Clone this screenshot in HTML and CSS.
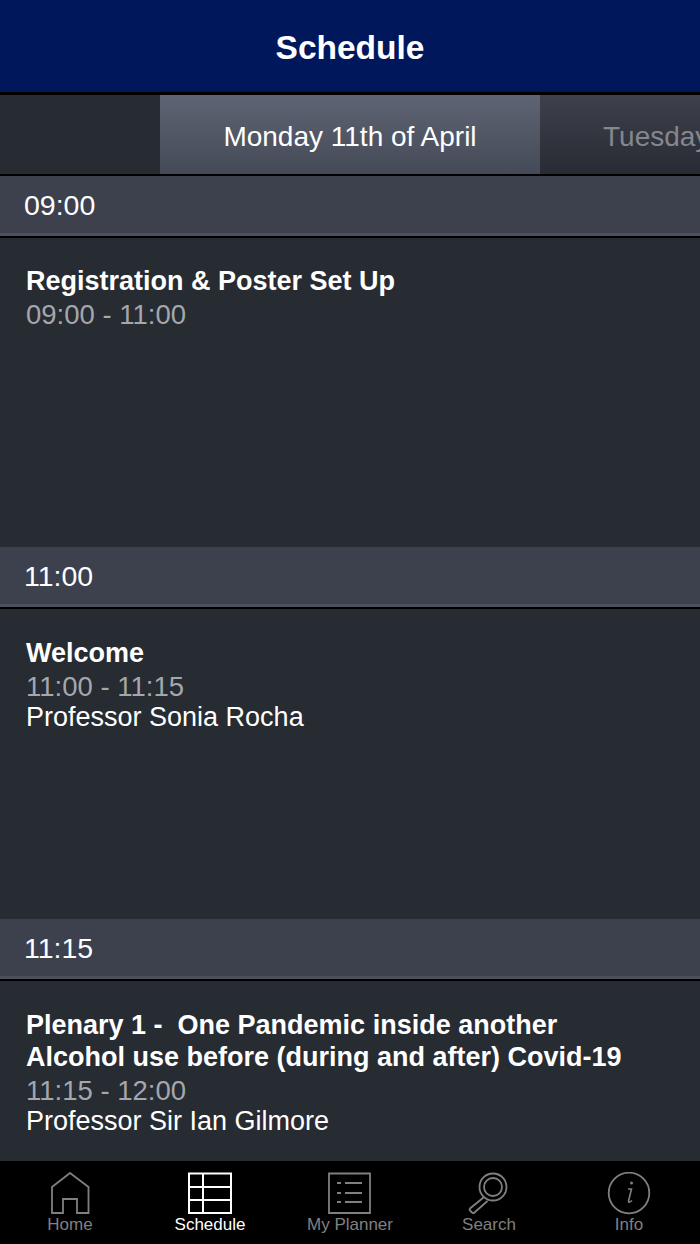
FILE: index.html
```html
<!DOCTYPE html>
<html lang="en">
<head>
    <meta charset="UTF-8">
    <title>Schedule</title>
    <link rel="stylesheet" href="styles.css">
</head>
<body>
<div class="app">
    <header class="navbar">Schedule</header>

    <div class="days">
        <div class="day-blank"></div>
        <div class="day day-active">Monday 11th of April</div>
        <div class="day day-next">Tuesday 12th of April</div>
    </div>

    <main class="list">
        <div class="time-head">09:00</div>
        <div class="session session-first">
            <div class="session-title">Registration &amp; Poster Set Up</div>
            <div class="session-time">09:00 - 11:00</div>
        </div>

        <div class="time-head">11:00</div>
        <div class="session">
            <div class="session-title">Welcome</div>
            <div class="session-time">11:00 - 11:15</div>
            <div class="session-person">Professor Sonia Rocha</div>
        </div>

        <div class="time-head">11:15</div>
        <div class="session session-last">
            <div class="session-title">Plenary 1 -&nbsp; One Pandemic inside another<br>Alcohol use before (during and after) Covid-19</div>
            <div class="session-time">11:15 - 12:00</div>
            <div class="session-person">Professor Sir Ian Gilmore</div>
        </div>
    </main>

    <nav class="tabbar">
        <div class="tab">
            <svg class="tab-icon" viewBox="0 0 44 44" fill="none" stroke="currentColor" stroke-width="1.8">
                <path d="M4 41V15L22 1 40.5 15V41H29V27H15V41Z"/>
            </svg>
            <span>Home</span>
        </div>
        <div class="tab tab-active">
            <svg class="tab-icon" viewBox="0 0 44 44" fill="none" stroke="currentColor" stroke-width="2">
                <path d="M1 1.5H43V41H1ZM1 15H43M1 28H43M15 1.5V41"/>
            </svg>
            <span>Schedule</span>
        </div>
        <div class="tab">
            <svg class="tab-icon" viewBox="0 0 44 44" fill="none" stroke="currentColor" stroke-width="1.8">
                <path d="M1 1.5H42V41H1Z"/>
                <path d="M9 11H13M17 11H34M9 21H13M17 21H34M9 30H13M17 30H34"/>
            </svg>
            <span>My Planner</span>
        </div>
        <div class="tab tab-shift">
            <svg class="tab-icon" viewBox="0 0 44 44" fill="none" stroke="currentColor" stroke-width="1.8">
                <circle cx="26" cy="15" r="13.5"/>
                <circle cx="26" cy="15" r="9"/>
                <path d="M16.5 25.5 3 36.5Q2 37.5 3 38.5L5.5 41Q6.5 41.5 7.5 40.5L20.5 29"/>
            </svg>
            <span>Search</span>
        </div>
        <div class="tab tab-shift">
            <svg class="tab-icon" viewBox="0 0 44 44" fill="none" stroke="currentColor" stroke-width="1.8">
                <circle cx="22" cy="21" r="20.3"/>
                <path d="M21 17H24.5L21.5 29Q21.5 31.5 25 28.5" stroke-width="1.6"/>
                <circle cx="24.5" cy="11" r="1.5" fill="currentColor" stroke="none"/>
            </svg>
            <span>Info</span>
        </div>
    </nav>
</div>
</body>
</html>
```

FILE: styles.css
```css
html, body {
    margin: 0;
    padding: 0;
}

body {
    background: #000000;
    font-family: "Liberation Sans", Arial, sans-serif;
}

.app {
    width: 700px;
    height: 1244px;
    display: flex;
    flex-direction: column;
    overflow: hidden;
}

.navbar {
    height: 92px;
    margin-bottom: 3px;
    padding-top: 4px;
    box-sizing: border-box;
    display: flex;
    align-items: center;
    justify-content: center;
    background: #00175c;
    color: #ffffff;
    font-size: 33.5px;
    font-weight: bold;
}

.days {
    height: 79px;
    margin-bottom: 2px;
    display: flex;
    background: #272b32;
    overflow: hidden;
}

.day-blank {
    width: 160px;
    flex: none;
}

.day {
    width: 380px;
    padding-top: 4px;
    box-sizing: border-box;
    flex: none;
    display: flex;
    align-items: center;
    justify-content: center;
    font-size: 28px;
    white-space: nowrap;
}

.day-active {
    background: linear-gradient(#5f6474, #454a58);
    color: #ffffff;
}

.day-next {
    justify-content: flex-start;
    padding-left: 63px;
    background: linear-gradient(#3e414b, #282b33);
    color: #84878e;
}

.list {
    flex: 1;
    display: flex;
    flex-direction: column;
    background: #272b32;
}

.time-head {
    height: 60px;
    margin-bottom: 2px;
    padding: 2px 0 0 24px;
    box-sizing: border-box;
    flex: none;
    display: flex;
    align-items: center;
    background: #3c414d;
    border-bottom: 3px solid #4c515c;
    box-shadow: 0 2px 0 #000000;
    color: #ffffff;
    font-size: 28.5px;
}

.session {
    height: 310px;
    padding: 28px 26px 0;
    box-sizing: border-box;
    flex: none;
    font-size: 27px;
    line-height: 32px;
}

.session-first {
    height: 309px;
    padding-top: 27px;
}

.session-last {
    height: auto;
    flex: 1;
}

.session-title {
    color: #ffffff;
    font-weight: bold;
}

.session-time {
    margin-top: 1px;
    color: #a4a7ac;
    font-size: 27.5px;
    line-height: 34px;
}

.session-person {
    color: #ffffff;
    line-height: 26px;
}

.tabbar {
    height: 83px;
    flex: none;
    display: flex;
    background: #000000;
}

.tab {
    width: 140px;
    box-sizing: border-box;
    flex: none;
    display: flex;
    flex-direction: column;
    align-items: center;
    padding-top: 11px;
    color: #808080;
    font-size: 17px;
    line-height: 18px;
}

.tab-shift {
    padding-right: 2px;
}

.tab-active {
    color: #ffffff;
}

.tab-icon {
    width: 44px;
    height: 44px;
    flex: none;
}
```
